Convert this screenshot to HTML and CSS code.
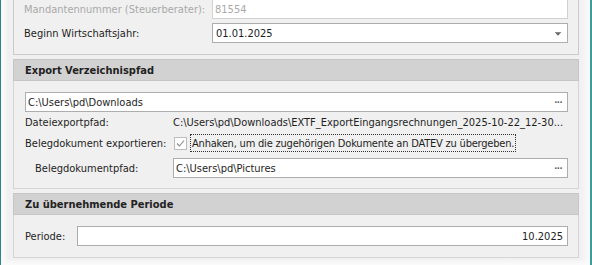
FILE: index.html
```html
<!DOCTYPE html>
<html lang="de">
<head>
<meta charset="utf-8">
<title>DATEV Export</title>
<link rel="stylesheet" href="styles.css">
</head>
<body>
<div class="window">
  <div class="content">
    <section class="group group-first">
      <div class="row row-top">
        <span class="label label-wide disabled">Mandantennummer (Steuerberater):</span>
        <div class="input input-disabled"><span class="val">81554</span></div>
      </div>
      <div class="row row-gap">
        <span class="label label-wide">Beginn Wirtschaftsjahr:</span>
        <div class="input"><span class="val">01.01.2025</span>
          <svg class="arrow" width="6" height="4" viewBox="0 0 6 4"><rect x="0" y="0" width="6" height="1" fill="#8a8a8a"/><path d="M0.5 1 H5.5 L3 3.8 Z" fill="#666"/></svg>
        </div>
      </div>
    </section>

    <section class="panel">
      <header class="panel-head">Export Verzeichnispfad</header>
      <div class="panel-body">
        <div class="input input-full"><span class="val">C:\Users\pd\Downloads</span><span class="dots">&middot;&middot;&middot;</span></div>
        <div class="row row-text">
          <span class="label">Dateiexportpfad:</span>
          <span class="path">C:\Users\pd\Downloads\EXTF_ExportEingangsrechnungen_2025-10-22_12-30...</span>
        </div>
        <div class="row row-check">
          <span class="label">Belegdokument exportieren:</span>
          <span class="check"><svg width="11" height="11" viewBox="0 0 11 11"><path d="M2 5.5 L4.5 8 L9 2.5" fill="none" stroke="#8a8a8a" stroke-width="1.1"/></svg></span>
          <span class="focus">Anhaken, um die zugehörigen Dokumente an DATEV zu übergeben.</span>
        </div>
        <div class="row row-sub">
          <span class="label label-sub">Belegdokumentpfad:</span>
          <div class="input"><span class="val">C:\Users\pd\Pictures</span><span class="dots">&middot;&middot;&middot;</span></div>
        </div>
      </div>
    </section>

    <section class="panel">
      <header class="panel-head">Zu übernehmende Periode</header>
      <div class="panel-body panel-body-period">
        <div class="row">
          <span class="label label-short">Periode:</span>
          <div class="input input-right"><span class="val">10.2025</span></div>
        </div>
      </div>
    </section>
  </div>
</div>
</body>
</html>
```

FILE: styles.css
```css
html, body {
  margin: 0;
  padding: 0;
  background: #ffffff;
}

body {
  font-family: "DejaVu Sans Condensed", "DejaVu Sans", sans-serif;
  font-stretch: condensed;
  font-size: 11px;
  color: #1e1e1e;
}

.window {
  width: 592px;
  height: 265px;
  box-sizing: border-box;
  overflow: hidden;
  border-left: 1px solid #2f8686;
  border-right: 2px solid #3a9c9c;
  background:
    linear-gradient(to bottom, rgba(255,255,255,0) 0, rgba(255,255,255,0) 258px, #fbfbfb 265px),
    linear-gradient(to right, #f4fafa 0, #fbfbfb 2px, #f0f0f0 7px, #f0f0f0 578px, #f3f3f3 582px, #fafafa 589px);
}

.content {
  padding-left: 12px;
  width: 566px;
  box-sizing: content-box;
}

.group {
  border: 1px solid #cbcbcb;
  border-top: none;
  padding: 0 10px 11px 10px;
}

.group-first {
  margin-top: -1px;
}

.row {
  display: flex;
  align-items: center;
}

.row-gap {
  margin-top: 4px;
}

.label {
  flex: 0 0 auto;
  width: 148px;
  white-space: nowrap;
}

.label-wide {
  width: 188px;
}

.label-sub {
  width: 138px;
  padding-left: 10px;
}

.label-short {
  width: 52px;
}

.disabled {
  color: #a9a9a9;
}

.input {
  flex: 1 1 auto;
  height: 20px;
  box-sizing: border-box;
  border: 1px solid #adadad;
  background: #ffffff;
  display: flex;
  align-items: center;
  padding: 0 4px 0 2px;
  white-space: nowrap;
}

.input-disabled {
  border-color: #d2d2d2;
  color: #a9a9a9;
}

.row-gap .input {
  padding-left: 3px;
}

.val {
  flex: 1 1 auto;
}

.input-right .val {
  text-align: right;
}

.arrow {
  margin-right: 2px;
  margin-top: 1px;
}

.dots {
  font-size: 9px;
  font-weight: bold;
  color: #5a5a5a;
  letter-spacing: -0.5px;
  margin-right: 1px;
}

.panel {
  margin-top: 4px;
}

.panel-head {
  height: 22px;
  box-sizing: border-box;
  border: 1px solid #c6c6c6;
  background: #d2d2d2;
  font-weight: bold;
  color: #222;
  padding-left: 11px;
  display: flex;
  align-items: center;
}

.panel-body {
  border: 1px solid #d4d4d4;
  border-top: none;
  padding: 11px 10px 10px 11px;
}

.panel-body-period {
  padding-bottom: 11px;
}

.input-full {
  width: 100%;
}

.row-text {
  height: 21px;
}

.row-check {
  height: 20px;
}

.row-sub {
  margin-top: 5px;
}

.path {
  white-space: nowrap;
}

.check {
  width: 13px;
  height: 13px;
  box-sizing: border-box;
  border: 1px solid #bdbdbd;
  background: #fff;
  display: flex;
  align-items: center;
  justify-content: center;
  margin-left: 1px;
  margin-right: 3px;
}

.focus {
  border: 1px dotted #333;
  height: 18px;
  box-sizing: border-box;
  display: flex;
  align-items: center;
  padding: 0 1px;
  letter-spacing: -0.2px;
  white-space: nowrap;
}
```
